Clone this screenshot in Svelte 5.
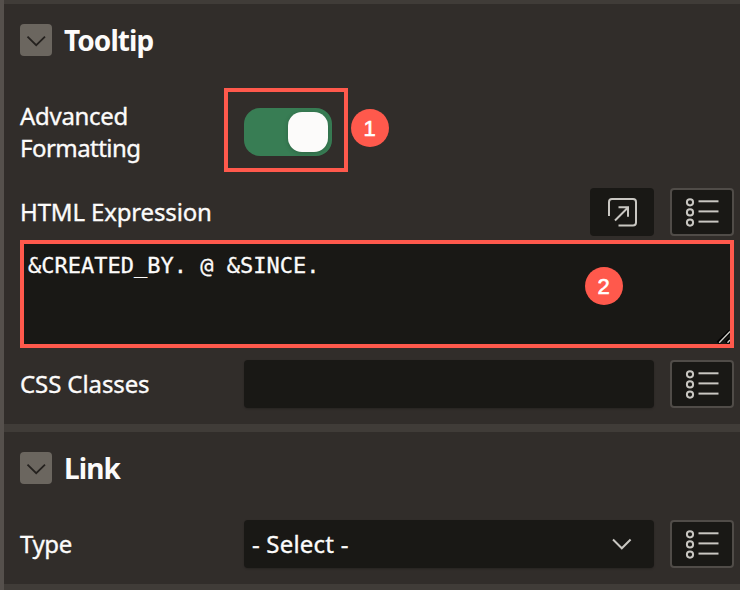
<script>
  let expression = $state('&CREATED_BY. @ &SINCE.');
</script>

{#snippet listIcon()}
  <svg width="34" height="30" viewBox="0 0 34 30" fill="none" stroke="#c9c7c2" stroke-width="2">
    {#each [5.3, 15.4, 25.6] as y}
      <circle cx="5" cy={y} r="3.1" />
      <path d="M13.5 {y - 1}H33.5" />
    {/each}
  </svg>
{/snippet}

{#snippet heading(title)}
  <header>
    <button class="collapse" aria-label="Collapse {title}">
      <svg width="32" height="32" viewBox="0 0 32 32" fill="none" stroke="#24211e" stroke-width="1.8">
        <path d="M7.5 12.7 16.2 21.2 25 12.7" />
      </svg>
    </button>
    <h2>{title}</h2>
  </header>
{/snippet}

<main>
  <section class="tooltip">
    {@render heading('Tooltip')}
    <div class="row advanced">
      <span class="label"><span class="adv">Advanced</span><br /><span class="fmt">Formatting</span></span>
      <div class="marked">
        <div class="switch"><i></i></div>
        <b class="badge one">1</b>
      </div>
    </div>
    <div class="row html">
      <span class="label wide"><span class="expr">HTML Expression</span></span>
      <button class="tool plain" aria-label="Expand editor">
        <svg width="64" height="48" viewBox="0 0 64 48" fill="none" stroke="#c9c7c2" stroke-width="2">
          <path d="M19 28V14Q19 11 22 11H43Q46 11 46 14V34.500Q46 37.500 43 37.500H28.500" />
          <path d="M25 32.500 38 19.500M28.500 19.200H38V28.800" />
        </svg>
      </button>
      <button class="tool" aria-label="List of values">{@render listIcon()}</button>
    </div>
    <div class="area">
      <textarea bind:value={expression} spellcheck="false" aria-label="HTML Expression"></textarea>
      <svg class="grip" width="14" height="14" viewBox="0 0 14 14" fill="none">
        <path d="M2 13 14 1.500M10.500 13 14 9.500" stroke="#000" stroke-width="4" />
        <path d="M3.200 12.700 14 1.500M11.500 12.700 14 10" stroke="#c9c7c2" stroke-width="1.5" />
      </svg>
      <b class="badge two">2</b>
    </div>
    <div class="row css">
      <span class="label"><span class="classes">CSS Classes</span></span>
      <div class="field"></div>
      <button class="tool" aria-label="List of values">{@render listIcon()}</button>
    </div>
  </section>

  <section class="linked">
    {@render heading('Link')}
    <div class="row type">
      <span class="label"><span class="typ">Type</span></span>
      <div class="field">
        <span class="sel">- Select -</span>
        <svg width="20" height="12" viewBox="0 0 20 12" fill="none" stroke="#c9c7c2" stroke-width="2">
          <path d="M1 1.500 9.800 10.300 18.600 1.500" />
        </svg>
      </div>
      <button class="tool" aria-label="List of values">{@render listIcon()}</button>
    </div>
  </section>
</main>

<style>
  :global(body) { background: #403c38; }
  main {
    box-sizing: border-box;
    width: 740px;
    height: 590px;
    overflow: hidden;
    display: flex;
    flex-direction: column;
    gap: 8px;
    padding-top: 4px;
    border-left: 4px solid #55504c;
    background: #403c38;
    color: #fcfbfa;
    font: 24px/32px "Noto Sans", "Open Sans", sans-serif;
  }
  section {
    box-sizing: border-box;
    flex: none;
    background: #312d2a;
    padding: 20px 6px 16px 16px;
  }
  .tooltip { height: 420px; }
  .linked { height: 152px; }
  header { display: flex; align-items: center; gap: 12px; height: 32px; }
  h2 { margin: 0; font-size: 28px; font-weight: 700; letter-spacing: -0.92px; }
  button { padding: 0; border: 0; font: inherit; }
  svg { display: block; flex: none; }
  .collapse { width: 32px; height: 32px; border-radius: 4px; background: #6b665f; }
  .row { display: flex; align-items: center; height: 48px; }
  .label { width: 224px; flex: none; white-space: nowrap; }
  .label, .sel { -webkit-text-stroke: 0.35px #fcfbfa; }
  .adv { letter-spacing: -0.3px; }
  .fmt { letter-spacing: -0.55px; }
  .expr { letter-spacing: -0.15px; }
  .classes { letter-spacing: -0.1px; }
  .typ { letter-spacing: -0.4px; }
  .sel { letter-spacing: 0.2px; }
  .wide { flex: 1; }
  .advanced { height: 84px; margin-top: 32px; }
  .advanced .label { box-sizing: border-box; width: 204px; padding-top: 4px; }
  .html { margin-top: 16px; }
  .css { margin-top: 12px; }
  .type { margin-top: 36px; }
  .marked {
    position: relative;
    box-sizing: border-box;
    width: 124px;
    height: 84px;
    padding: 16px;
    border: 4px solid #ff594c;
  }
  .switch {
    display: flex;
    justify-content: flex-end;
    box-sizing: border-box;
    width: 88px;
    height: 48px;
    padding: 4px;
    border-radius: 16px;
    background: #387d54;
  }
  .switch i {
    width: 40px;
    height: 40px;
    border-radius: 14px;
    background: #fcfbfa;
    box-shadow: 0 1px 5px #0003;
  }
  .badge {
    position: absolute;
    width: 38px;
    height: 38px;
    border-radius: 50%;
    background: #ff594c;
    color: #fff;
    text-align: center;
    font: 400 22px/39px "Liberation Sans", Arial, sans-serif;
    -webkit-text-stroke: 0.6px #fff;
  }
  .one { left: 123px; top: 17px; text-indent: -1px; }
  .two { left: 561px; top: 23px; text-indent: -1px; }
  .tool {
    display: flex;
    align-items: center;
    justify-content: center;
    box-sizing: border-box;
    width: 64px;
    height: 48px;
    margin-left: 16px;
    border: 2px solid #504c48;
    border-radius: 4px;
    background: #191815;
  }
  .plain { border: 0; }
  .field {
    display: flex;
    align-items: center;
    justify-content: space-between;
    box-sizing: border-box;
    flex: 1;
    height: 48px;
    padding: 0 22px 0 8px;
    border-radius: 4px;
    background: #191815;
    box-shadow: 0 1px 2px #0003;
  }
  .area {
    position: relative;
    box-sizing: border-box;
    height: 108px;
    margin-top: 4px;
    border: 4px solid #ff594c;
    background: #191815;
  }
  textarea {
    display: block;
    box-sizing: border-box;
    width: 100%;
    height: 100%;
    padding: 8px 4px;
    border: 0;
    outline: 0;
    resize: none;
    background: transparent;
    color: #fcfbfa;
    font: 22px/28px "DejaVu Sans Mono", monospace;
    -webkit-text-stroke: 0.3px #fcfbfa;
  }
  .grip { position: absolute; right: 0; bottom: 0; }
</style>
